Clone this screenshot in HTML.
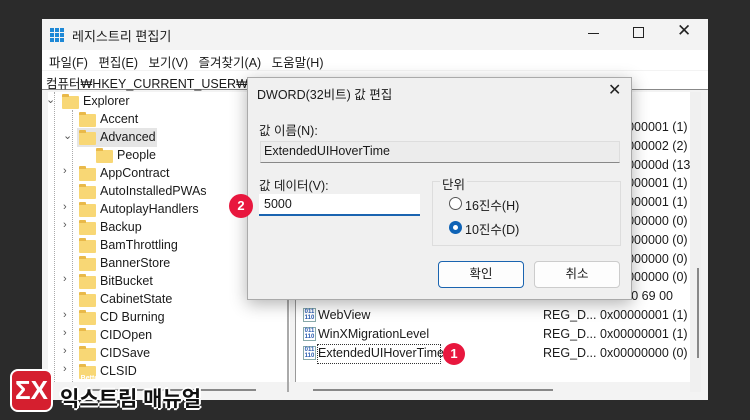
<!DOCTYPE html>
<html><head><meta charset="utf-8"><style>
*{margin:0;padding:0;box-sizing:border-box}
body{width:750px;height:420px;background:#2b2b2b;position:relative;overflow:hidden;font-family:"Liberation Sans","Noto Sans CJK KR",sans-serif;font-size:12px;color:#1a1a1a}
.a{position:absolute;white-space:nowrap}
.fold{position:absolute;width:17px;height:13px;background:#f8d775;border-radius:1px}
.fold:before{content:"";position:absolute;left:0;top:-2px;width:7px;height:3px;background:#e9b94a;border-radius:1px 1px 0 0}
.ri{position:absolute;width:13px;height:14px;border:1px solid #8aa;background:#fff;font-size:6px;color:#2a5db0;font-weight:bold;line-height:6px;text-align:center}
</style></head><body>
<div class="a" style="left:42px;top:19px;width:666px;height:381px;background:#f3f3f3"></div>
<div class="a" style="left:50px;top:28px;width:14px;height:14px;background:#1e88d6;background-image:linear-gradient(90deg,transparent 4px,#f3f3f3 4px,#f3f3f3 5px,transparent 5px,transparent 9px,#f3f3f3 9px,#f3f3f3 10px,transparent 10px),linear-gradient(transparent 4px,#f3f3f3 4px,#f3f3f3 5px,transparent 5px,transparent 9px,#f3f3f3 9px,#f3f3f3 10px,transparent 10px)"></div>
<div class="a" style="left:72px;top:26px;font-size:13px">레지스트리 편집기</div>
<div class="a" style="left:588px;top:33px;width:11px;height:1px;background:#222"></div>
<div class="a" style="left:633px;top:27px;width:11px;height:11px;border:1px solid #222"></div>
<div class="a" style="left:677px;top:21px;font-size:17px;color:#222">✕</div>
<div class="a" style="left:42px;top:50px;width:666px;height:20px;background:#fff"></div>
<div class="a" style="left:49px;top:52px;font-size:12.5px">파일(F)&nbsp;&nbsp;&nbsp;편집(E)&nbsp;&nbsp;&nbsp;보기(V)&nbsp;&nbsp;&nbsp;즐겨찾기(A)&nbsp;&nbsp;&nbsp;도움말(H)</div>
<div class="a" style="left:42px;top:71px;width:666px;height:19px;background:#fff;border-bottom:1px solid #888"></div>
<div class="a" style="left:46px;top:73px;font-size:12.5px">컴퓨터₩HKEY_CURRENT_USER₩Software</div>
<div class="a" style="left:48px;top:92px;width:242px;height:290px;background:#fff"></div>
<div class="a" style="left:54px;top:92px;width:1px;height:290px;border-left:1px dotted #aaa"></div>
<div class="a" style="left:72px;top:110px;width:1px;height:272px;border-left:1px dotted #aaa"></div>
<div class="a" style="left:77px;top:128px;width:80px;height:19px;background:#e5e5e5"></div>
<div id="tree"></div>
<div class="a" style="left:90px;top:389px;width:166px;height:2px;background:#888"></div>
<div class="a" style="left:287px;top:92px;width:2px;height:300px;background:#aaa"></div>
<div class="a" style="left:295px;top:92px;width:398px;height:290px;background:#fff;border-left:1px solid #999"></div>
<div class="a" style="left:690px;top:92px;width:11px;height:300px;background:#f0f0f0"></div>
<div class="a" style="left:697px;top:268px;width:2px;height:90px;background:#888"></div>
<div class="a" style="left:313px;top:389px;width:240px;height:2px;background:#888"></div>
<div class="a" style="left:602px;top:96px">이터</div>
<div class="a" style="left:600px;top:118px;font-size:12.5px;line-height:18.8px">0x00000001 (1)<br>0x00000002 (2)<br>0x0000000d (13<br>0x00000001 (1)<br>0x00000001 (1)<br>0x00000000 (0)<br>0x00000000 (0)<br>0x00000000 (0)<br>0x00000000 (0)<br>&nbsp;&nbsp;&nbsp;&nbsp;&nbsp;&nbsp;&nbsp;90 69 00<br>0x00000001 (1)<br>0x00000001 (1)<br>0x00000000 (0)</div>
<div class="a" style="left:543px;top:306px;font-size:12.5px;line-height:18.8px">REG_D...<br>REG_D...<br>REG_D...</div>
<div class="a" style="left:318px;top:306px;font-size:12.5px;line-height:18.8px">WebView<br>WinXMigrationLevel<br>ExtendedUIHoverTime</div>
<div class="ri" style="left:303px;top:308px">011<br>110</div>
<div class="ri" style="left:303px;top:327px">011<br>110</div>
<div class="ri" style="left:303px;top:346px">011<br>110</div>
<div class="a" style="left:317px;top:344px;width:124px;height:20px;border:1px dotted #333"></div>
<div class="a" style="left:443px;top:343px;width:22px;height:22px;border-radius:50%;background:#e8173e;color:#fff;font-weight:bold;font-size:13px;text-align:center;line-height:22px">1</div>
<div class="a" style="left:247px;top:77px;width:385px;height:223px;background:#f0f0f0;border:1px solid #aaa;box-shadow:0 4px 16px rgba(0,0,0,.3)"></div>
<div class="a" style="left:257px;top:84px;font-size:12.5px">DWORD(32비트) 값 편집</div>
<div class="a" style="left:608px;top:80px;font-size:16px;color:#222">✕</div>
<div class="a" style="left:259px;top:120px;font-size:12.5px">값 이름(N):</div>
<div class="a" style="left:260px;top:141px;width:360px;height:22px;background:#ececec;border:1px solid #ddd;border-bottom:1px solid #888"></div>
<div class="a" style="left:264px;top:144px;font-size:12.5px">ExtendedUIHoverTime</div>
<div class="a" style="left:259px;top:175px;font-size:12.5px">값 데이터(V):</div>
<div class="a" style="left:259px;top:194px;width:161px;height:22px;background:#fff;border-bottom:2px solid #1a64b0"></div>
<div class="a" style="left:264px;top:197px;font-size:12.5px">5000</div>
<div class="a" style="left:229px;top:194px;width:24px;height:24px;border-radius:50%;background:#e8173e;color:#fff;font-weight:bold;font-size:13px;text-align:center;line-height:24px">2</div>
<div class="a" style="left:432px;top:181px;width:189px;height:65px;border:1px solid #ddd"></div>
<div class="a" style="left:440px;top:174px;font-size:12.5px;background:#f0f0f0;padding:0 2px">단위</div>
<div class="a" style="left:449px;top:197px;width:13px;height:13px;border-radius:50%;border:1px solid #555;background:#fff"></div>
<div class="a" style="left:465px;top:195px;font-size:12.5px">16진수(H)</div>
<div class="a" style="left:449px;top:221px;width:13px;height:13px;border-radius:50%;background:#0f63b6"></div>
<div class="a" style="left:453px;top:225px;width:5px;height:5px;border-radius:50%;background:#fff"></div>
<div class="a" style="left:465px;top:219px;font-size:12.5px">10진수(D)</div>
<div class="a" style="left:438px;top:261px;width:86px;height:27px;background:#fdfdfd;border:1px solid #1a64b0;border-radius:4px;text-align:center;line-height:25px;font-size:12.5px">확인</div>
<div class="a" style="left:534px;top:261px;width:86px;height:27px;background:#fdfdfd;border:1px solid #ccc;border-radius:4px;text-align:center;line-height:25px;font-size:12.5px">취소</div>
<div class="a" style="left:10px;top:369px;width:43px;height:43px;background:#d51f2f;border-radius:8px;border:2px solid #fff;color:#fff;font-weight:bold;font-size:26px;text-align:center;line-height:38px">ΣX</div>
<div class="a" style="left:62px;top:375px;font-size:7px;font-weight:bold;color:#fff">More Better IT Life</div>
<div class="a" style="left:60px;top:383px;font-size:21px;font-weight:bold;color:#111;text-shadow:2px 0 #fff,-2px 0 #fff,0 2px #fff,0 -2px #fff,1px 1px #fff,-1px -1px #fff">익스트림 매뉴얼</div>
<script>
var t=[["Explorer",1,"v"],["Accent",2,""],["Advanced",2,"v"],["People",3,""],["AppContract",2,">"],["AutoInstalledPWAs",2,""],["AutoplayHandlers",2,">"],["Backup",2,">"],["BamThrottling",2,""],["BannerStore",2,""],["BitBucket",2,">"],["CabinetState",2,""],["CD Burning",2,">"],["CIDOpen",2,">"],["CIDSave",2,">"],["CLSID",2,">"]];
var h="";t.forEach(function(r,i){var y=92+i*18,x=r[1]==1?62:r[1]==2?79:96;
if(r[2])h+='<div class="a" style="left:'+(x-16)+'px;top:'+(y+1)+'px;color:#555;font-size:11px">'+(r[2]=="v"?"⌄":"›")+'</div>';
h+='<div class="fold" style="left:'+x+'px;top:'+(y+4)+'px"></div><div class="a" style="left:'+(x+21)+'px;top:'+(y+2)+'px;font-size:12.5px">'+r[0]+'</div>';});
document.getElementById("tree").innerHTML=h;
</script>
</body></html>
